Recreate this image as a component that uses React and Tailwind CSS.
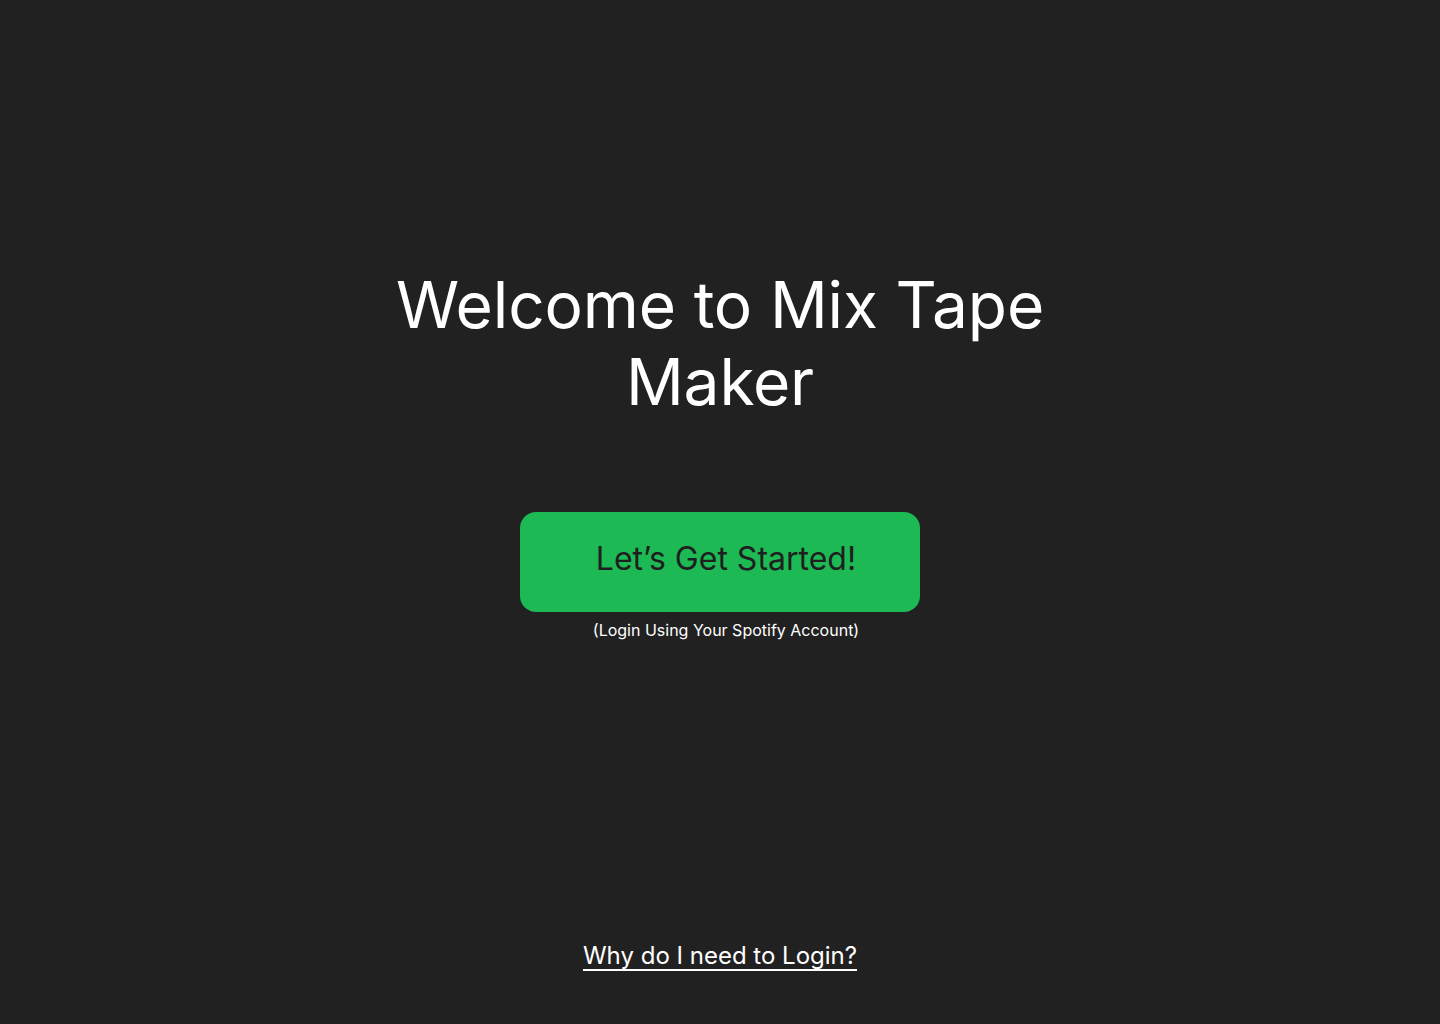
import React from "react";

const App = () => {
    return (
        <div
            className="flex flex-col items-center h-screen bg-[#212121] text-white pt-[266px] pb-[52px]"
            style={{ fontFamily: "Inter, 'Noto Sans', sans-serif" }}
        >
            <h1 className="w-[700px] text-center text-[64px] leading-[77px] font-normal tracking-[-0.15px]">
                Welcome to Mix Tape Maker
            </h1>

            {/* Login button */}
            <button className="mt-[92px] w-[400px] h-[100px] rounded-2xl bg-[#1DB954] text-[#1f1f1f] text-[32px] pl-3 pb-[6px]">
                Let’s Get Started!
            </button>
            <p className="mt-[6px] pl-3 text-base leading-6 text-white">
                (Login Using Your Spotify Account)
            </p>

            <a
                href="#"
                className="mt-auto text-2xl leading-8 underline decoration-2 underline-offset-[5px]"
            >
                Why do I need to Login?
            </a>
        </div>
    );
};

export default App;
